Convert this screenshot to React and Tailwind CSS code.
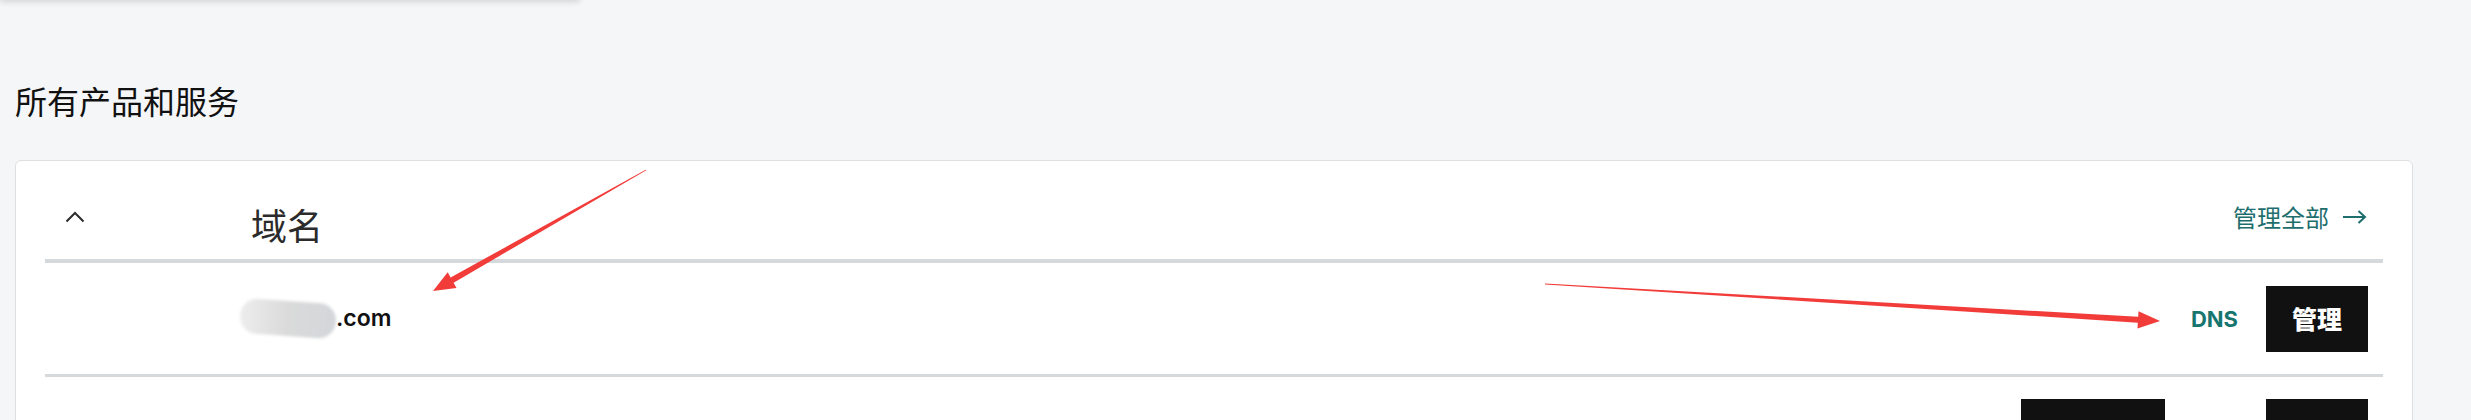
import React from 'react';

const cjk = "font-['Noto_Sans_CJK_SC',sans-serif]";
const latin = "font-['Inter','Noto_Sans_CJK_SC',sans-serif]";

const ChevronUp = () => (
  <svg width="20" height="12" viewBox="0 0 20 12" fill="none">
    <polyline points="1.5,10.5 10,2 18.5,10.5" stroke="#2b2b2b" strokeWidth="2" />
  </svg>
);

const ArrowRight = () => (
  <svg width="25" height="14" viewBox="0 0 25 14" fill="none">
    <line x1="1" y1="7" x2="23" y2="7" stroke="#1e6e6e" strokeWidth="2" />
    <polyline points="16.5,1 23,7 16.5,13" stroke="#1e6e6e" strokeWidth="2" />
  </svg>
);

// red annotation arrows drawn on top of the page
const Annotations = () => (
  <svg
    className="pointer-events-none absolute left-0 top-0"
    width="2471"
    height="420"
    viewBox="0 0 2471 420"
  >
    <polygon
      fill="#f13c3a"
      points="646.3,170.3 453.6,282.7 456.5,287.9 433,291 447.7,272.3 450.6,277.5 645.7,169.7"
    />
    <polygon
      fill="#f13c3a"
      points="1545,284.4 2137.8,322.7 2137.5,328.5 2160,321 2138.5,311.2 2138.2,316.7 1545,283.6"
    />
  </svg>
);

export default function App() {
  return (
    <div className="relative min-h-screen w-[2471px] overflow-hidden bg-[#f5f6f8]">
      {/* bottom edge of the card above */}
      <div className="-mt-[8px] h-[8px] w-[580px] bg-white shadow-[0_2px_6px_rgba(0,0,0,0.14)]" />

      <div className="pl-[15px] pt-[81px]">
        <h2 className={`${cjk} text-[32px] leading-[38px] font-normal text-[#111]`}>
          所有产品和服务
        </h2>

        <div className="mt-[41px] w-[2398px] rounded-[6px] border border-[#dedfe1] bg-white px-[29px]">
          {/* header */}
          <div className="flex h-[98px] items-center pt-[14px]">
            <div className="w-[206px] pl-[20px]">
              <ChevronUp />
            </div>
            <span className={`${cjk} mt-[14px] text-[36px] leading-none text-[#2b2b2b]`}>域名</span>
            <div className="ml-auto flex items-center gap-[13px] pr-[16px]">
              <span className={`${cjk} text-[24px] leading-none text-[#1e6e6e]`}>管理全部</span>
              <ArrowRight />
            </div>
          </div>
          <div className="h-[4px] bg-[#d6d9dc]" />

          {/* domain row */}
          <div className="flex h-[111px] items-center">
            <div className="flex items-center pl-[195px]">
              <div className="h-[35px] w-[96px] rotate-[4deg] rounded-[17px] bg-gradient-to-r from-[#ededed] via-[#dadada] to-[#d3d6da] blur-[1.5px]" />
              <span className={`${latin} text-[23px] font-semibold leading-none text-[#111]`}>.com</span>
            </div>
            <div className="ml-auto flex items-center pr-[15px]">
              <span className={`${latin} text-[22px] font-bold leading-none text-[#177570]`}>DNS</span>
              <button className={`${cjk} ml-[28px] flex h-[66px] w-[102px] items-center justify-center bg-[#111] text-[25px] font-black text-white`}>
                管理
              </button>
            </div>
          </div>
          <div className="h-[3px] bg-[#d6d9dc]" />

          {/* next row, cut off */}
          <div className="flex justify-end gap-[101px] pr-[15px] pt-[22px]">
            <div className="h-[66px] w-[144px] bg-[#111]" />
            <div className="h-[66px] w-[102px] bg-[#111]" />
          </div>
        </div>
      </div>

      <Annotations />
    </div>
  );
}
